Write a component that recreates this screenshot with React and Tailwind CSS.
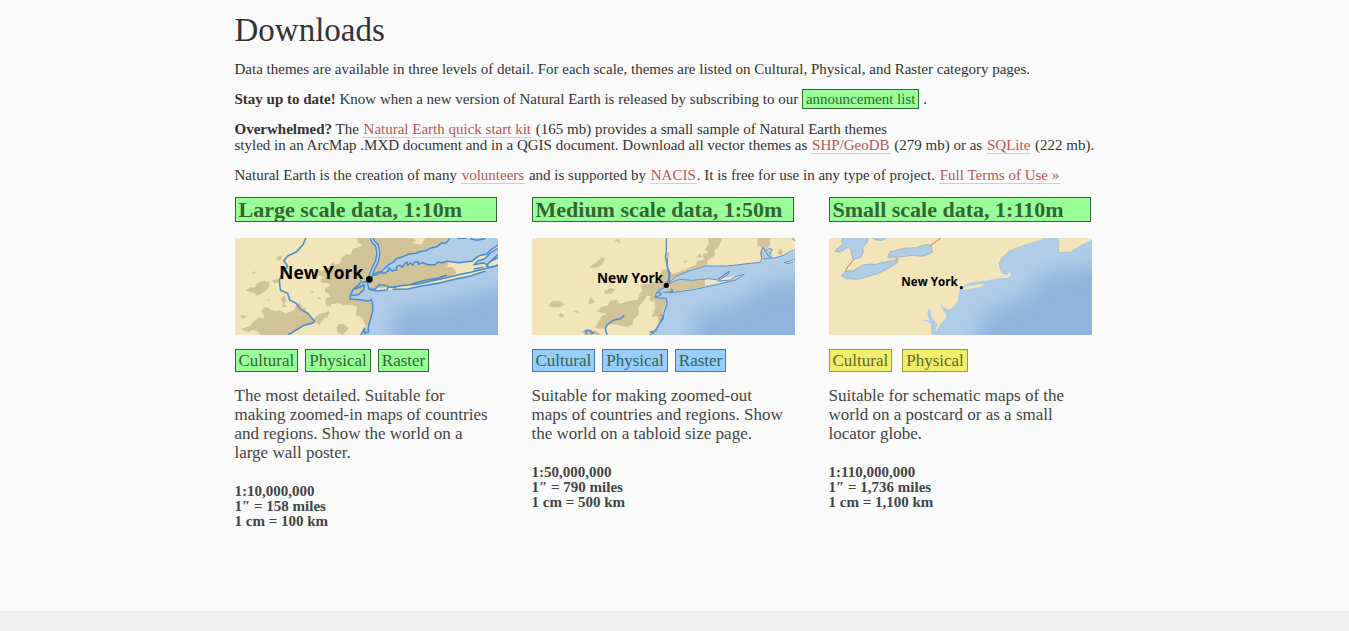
const SAND = "#f2e5ba";
const URBAN = "#d2c297";
const WATER = "#b0cde8";
const DEEP = "#90b4db";
const COAST = "#4a8ccb";

function City({ x, y, size, dotX, dotY, r }) {
  return (
    <g>
      <text x={x} y={y} fontSize={size} fontWeight="700" fontFamily="'Open Sans', 'Noto Sans', sans-serif" fill="#000">
        New York
      </text>
      <circle cx={dotX} cy={dotY} r={r} fill="#000" />
    </g>
  );
}

function LargeMap() {
  return (
    <svg viewBox="30 24 789 291" className="block w-full" role="img" aria-label="Large scale map of New York">
      <defs>
        <filter id="soft-large" x="-30%" y="-30%" width="160%" height="160%"><feGaussianBlur stdDeviation="30" /></filter>
        <clipPath id="sea-large"><path d="M428 160 L432 178 L450 182 L500 180 L540 176 L600 166 L660 152 L740 136 L780 122 L819 106 V315 H408 L420 294 L432 290 L443 244 L443 222 L430 214 L374 206 L384 184 L404 164 Z" /></clipPath>
      </defs>
      <rect x="30" y="24" width="789" height="291" fill={SAND} />
      <g fill={URBAN}>
        <path d="M394 24 H560 L572 30 L562 40 L590 44 L600 24 H672 L632 50 L572 72 L522 88 L482 108 L448 136 L436 156 L420 180 L380 190 L372 206 L440 214 L443 240 L434 288 L424 290 L410 262 L392 256 L396 232 L384 226 L362 224 L350 228 L346 220 L320 222 L300 218 L304 204 L318 200 L310 190 L300 186 L300 174 L316 168 L310 160 L292 158 L286 150 L300 140 L270 132 L276 122 L298 120 L310 112 L322 96 L332 104 L346 100 L350 84 L362 74 L378 72 L384 56 L406 50 L412 42 L398 38 Z" />
        <path d="M46 298 L76 288 L84 276 L102 262 L118 266 L116 254 L108 246 L114 234 L126 230 L138 240 L152 244 L164 240 L182 252 L206 240 L220 254 L244 250 L270 270 L268 280 L232 290 L190 315 H106 L98 304 L84 300 L70 306 Z" />
        <path d="M62 182 L76 172 L90 172 L94 162 L112 152 L134 156 L132 170 L124 182 L110 190 L98 198 L88 190 Z" />
        <path d="M154 88 L158 78 L168 76 L172 84 L164 92 Z M78 130 L92 124 L94 128 L84 132 Z M140 152 L158 146 L164 158 L150 160 Z M126 212 L132 206 L134 214 Z M166 208 L178 196 L184 210 L176 222 L188 232 L172 232 L174 220 Z M46 256 L60 256 L66 262 L50 266 Z M206 242 L214 224 L224 216 L230 232 L244 236 L240 252 L218 252 Z M256 188 L264 182 L266 190 Z M268 264 L284 252 L298 248 L312 262 L298 264 L290 276 L282 286 L274 278 Z M298 250 L310 242 L316 250 L306 258 Z M334 296 L340 282 L356 282 L372 294 L366 302 L352 315 L340 310 Z M300 220 L320 216 L318 228 L304 230 Z M266 134 L276 126 L284 136 L272 142 Z M276 202 L288 202 L284 210 Z" />
      </g>
      <path d="M448 134 L466 118 L482 104 L500 92 L522 84 L572 70 L632 48 L672 24 H819 V46 L794 62 L786 74 L762 78 L740 94 L700 98 L666 94 L640 98 L624 104 L592 98 L578 106 L548 96 L530 112 L500 120 L484 126 Z" fill={WATER} />
      <g clipPath="url(#sea-large)">
        <rect x="360" y="100" width="460" height="220" fill={WATER} />
        <path d="M510 240 L650 220 L819 170 H920 V430 H480 Z" fill={DEEP} filter="url(#soft-large)" />
      </g>
      <path d="M392 176 L414 166 L418 178 L402 192 L386 192 Z" fill={URBAN} />
      <path d="M438 150 L448 136 L484 126 L500 120 L530 112 L548 98 L578 106 L592 98 L624 104 L664 94 L670 104 L664 112 L680 110 L690 120 L694 130 L664 144 L600 160 L500 172 L432 176 Z" fill={URBAN} />
      <path d="M819 55 L798 67 L778 87 L758 93 L747 104 L774 99 L786 106 L795 95 L819 78 Z" fill={WATER} />
      <path d="M440 24 L445 36 L456 46 L460 72 L456 94 L446 114 L438 134 L430 160" fill="none" stroke={COAST} strokeWidth="13" strokeLinejoin="round" />
      <path d="M440 24 L445 36 L456 46 L460 72 L456 94 L446 114 L438 134 L430 164" fill="none" stroke={WATER} strokeWidth="5" strokeLinejoin="round" />
      <g fill="none" stroke={COAST} strokeWidth="4.5" strokeLinejoin="round" strokeLinecap="round">
        <path d="M242 25 L234 44 L214 66 L188 78 L176 92 L188 108 L172 128 L163 150 L166 180 L188 190 L194 210 L214 220 L224 236 L248 250 L269 274 L262 280 L236 286 L190 315" />
        <path d="M444 134 L460 126 L470 124 L480 114 L490 104 L506 96 L514 86 L534 80 L552 72 L572 70 L590 64 L604 62 L616 54 L636 50 L648 40 L664 38 L674 25 M738 26 L756 31 L779 26 M698 25 H722" />
        <path d="M446 136 L456 134 L468 128 L480 130 L490 122 L492 114 L500 122 L516 120 L514 110 L524 106 L532 112 L538 102 L546 96 L548 106 L556 98 L564 106 L568 96 L580 96 L580 104 L592 98 L612 104 L630 104 L640 96 L650 98 L666 94 L700 98 L740 94 L762 77 L786 72 L794 62 L819 45" />
        <path d="M819 55 L798 67 L778 87 L758 93 L747 104 L774 99 L786 104 L819 74 M819 83 L795 95 L784 110 L799 112 L819 105" />
        <path d="M819 106 L790 114 L774 118 L740 126 L710 132 L664 143 L620 153 L580 162 L540 166 L500 172 M504 178 L548 177 L590 168 L640 160 L690 148 L736 138 L780 124 M556 164 L580 156 L606 150 L640 144 L664 136 M748 117 L774 112" />
        <path d="M426 154 L432 176 L450 178 L463 164 L480 166 L490 170 L486 180 L454 183 L432 178 M490 172 L512 172 M408 153 L402 164 L386 176 L378 192 L374 207 L404 209 L430 214 L439 208 L443 222 L443 244 L437 266 L430 290 L430 306 L418 310 L419 294 L407 315 M418 164 L416 180 L400 194 L382 196 M391 177 L417 165 M426 153 L412 158" />
      </g>
      <City x={163} y={146} size={52} dotX={433} dotY={148} r={10} />
    </svg>
  );
}

function MediumMap() {
  return (
    <svg viewBox="21 24 789 291" className="block w-full" role="img" aria-label="Medium scale map of New York">
      <defs>
        <filter id="soft-medium" x="-30%" y="-30%" width="160%" height="160%"><feGaussianBlur stdDeviation="30" /></filter>
        <clipPath id="sea-medium"><path d="M392 200 L430 188 L560 168 L660 134 L700 98 L810 62 V315 H380 L410 270 L424 214 Z" /></clipPath>
      </defs>
      <rect x="21" y="24" width="789" height="291" fill={SAND} />
      <g fill={URBAN}>
        <path d="M550 24 H592 L582 48 L568 62 L570 76 L546 92 L548 106 L500 120 L450 150 L410 184 L394 202 L382 216 L372 210 L378 198 L342 198 L352 180 L346 164 L374 160 L400 150 L412 116 L430 120 L444 132 L482 118 L514 104 L516 92 L536 90 L534 72 L550 68 L540 58 L552 40 Z" />
        <path d="M210 294 L220 276 L230 258 L246 252 L214 244 L228 232 L248 226 L258 212 L276 210 L284 222 L314 212 L336 210 L346 190 L366 200 L340 232 L342 252 L326 268 L324 282 L304 292 L278 284 L256 282 L236 296 Z" />
        <path d="M388 206 L424 208 L414 246 L402 278 L396 258 L380 262 L390 236 Z" />
        <path d="M194 112 L218 94 L232 82 L240 88 L232 102 L212 114 Z M70 226 L82 214 L106 212 L120 224 L104 232 L78 232 Z M190 216 L198 202 L212 218 L194 222 Z M236 184 L258 174 L272 178 L260 190 L242 192 Z M268 34 L280 26 L288 38 Z M144 246 L156 242 L164 248 Z M100 256 L108 248 L118 258 L108 264 Z M168 306 L186 296 L214 304 L230 315 H184 Z M472 96 L488 90 L484 100 Z M516 78 L526 70 L532 80 L522 84 Z M422 70 L432 66 L434 80 L422 88 Z M698 24 H738 L734 46 L724 60 L714 92 L704 70 L710 54 L696 44 Z M756 68 L766 56 L774 66 L766 76 Z" />
      </g>
      <path d="M428 160 L454 140 L492 124 L546 108 L606 108 L672 100 L704 98 L714 88 L710 52 L724 66 L738 58 L744 86 L810 62 V315 H384 L410 276 L424 210 L392 200 L398 182 L420 168 L430 136 L425 90 L428 90 L434 132 Z" fill={WATER} />
      <g clipPath="url(#sea-medium)">
        <path d="M510 252 L620 226 L730 160 L920 146 V430 H490 Z" fill={DEEP} filter="url(#soft-medium)" />
      </g>
      <path d="M428 174 L436 160 L464 154 L542 148 L586 146 L626 138 L656 134 L612 152 L554 164 L500 176 L440 186 L416 186 Z" fill={SAND} />
      <path d="M428 174 L436 160 L464 154 L540 148 L540 168 L500 176 L440 186 L416 186 Z" fill={URBAN} />
      <path d="M582 146 L614 124 L606 138 L580 152 Z" fill={WATER} />
      <path d="M776 98 L804 88 L810 88 V102 L796 100 Z" fill={SAND} />
      <g fill="none" stroke="#5b92c9" strokeWidth="3" strokeLinejoin="round">
        <path d="M424 24 V64 L421 80 L427 112 L432 134 L430 152 L420 168 M427 84 V112 L435 130 L433 156" strokeWidth="4" />
        <path d="M425 166 L454 138 L492 123 L544 108 L608 108 L676 100 L706 97 L710 86 L708 66 L714 52 L722 64 L732 56 L742 58 L732 76 L738 84 L748 84 L776 76 L794 65 L810 59 M722 64 L730 78 L738 84 L714 87" />
        <path d="M426 164 L444 156 L464 148 L500 151 L552 146 L578 150 L604 128 L614 124 L610 132 L590 145 L580 153 L618 150 L630 140 L658 133 L632 150 L576 164 L506 179 L448 187 L414 187 M579 147 L614 124 M810 88 L778 98 L792 100 L810 95 M800 24 L810 32" />
        <path d="M425 168 L404 180 L393 192 L390 203 L424 206 L426 222 L417 248 L414 268 L404 280 L393 303 L374 306 M398 184 L410 192 L391 203 M407 254 L414 258 L400 286 L384 312 M374 315 L393 302 M438 176 L444 184 L432 186" strokeWidth="4" />
        <path d="M298 256 L288 266 L266 270 L246 284 L241 296 L246 315 M184 315 L183 302 L196 302 L200 311 L208 307" strokeWidth="5" />
      </g>
      <City x={216} y={159} size={41} dotX={424} dotY={166} r={8} />
    </svg>
  );
}

function SmallMap() {
  return (
    <svg viewBox="21 24 789 291" className="block w-full" role="img" aria-label="Small scale map of New York">
      <defs>
        <filter id="soft-small" x="-30%" y="-30%" width="160%" height="160%"><feGaussianBlur stdDeviation="30" /></filter>
        <clipPath id="sea-small"><path d="M412 180 L566 140 L532 96 L560 62 L668 24 H810 V315 H340 L410 220 Z" /></clipPath>
      </defs>
      <rect x="21" y="24" width="789" height="291" fill={SAND} />
      <path d="M668 24 L640 35 L562 62 L540 84 L532 98 L534 118 L544 132 L556 136 L562 126 L566 128 L566 138 L558 144 L530 144 L490 152 L452 156 L428 166 L412 180 L408 210 L400 224 L382 240 L368 234 L356 222 L362 240 L372 252 L372 264 L354 284 L342 306 L340 302 L347 282 L330 264 L325 236 L320 234 L316 252 L322 270 L302 270 L326 280 L328 315 H810 V24 Z" fill={WATER} />
      <g clipPath="url(#sea-small)">
        <path d="M480 256 L560 216 L630 190 L660 130 L920 96 V430 H440 Z" fill={DEEP} filter="url(#soft-small)" />
      </g>
      <path d="M414 180 L430 170 L470 162 L488 164 L478 170 L444 176 Z" fill={SAND} />
      <path d="M710 24 H810 V29 L782 42 L742 67 H710 Z" fill={SAND} />
      <g fill={WATER} stroke="#999fc0" strokeWidth="2" strokeLinejoin="round">
        <path d="M60 24 L62 44 L48 54 L38 64 L54 66 L78 52 L86 60 L94 90 L118 80 L124 68 L122 52 L136 36 L138 24 M150 24 L160 29 L180 32 L192 24" />
        <path d="M58 136 L70 124 L94 122 L124 104 L138 104 L144 102 L160 103 L190 96 L226 89 L228 96 L204 112 L174 128 L138 140 L106 148 L74 146 Z" />
        <path d="M196 80 L204 66 L232 58 L250 54 L262 54 L284 53 L300 46 L316 44 L328 46 L331 66 L316 74 L302 79 L272 76 L236 81 L214 81 L202 84 Z" />
      </g>
      <path d="M94 90 L78 110 L70 124 M222 82 L228 90 M326 46 L357 24" fill="none" stroke="#e36b50" strokeWidth="3" />
      <path d="M710 24 V67 H742 M640 35 L562 62 L540 84 L532 98 L534 118 L544 132" fill="none" stroke="#a9bdbb" strokeWidth="2" />
      <City x={238} y={168} size={35} dotX={418} dotY={173} r={5} />
    </svg>
  );
}

const tones = {
  green: "border-[#336633] bg-[#99ff99] text-[#336633]",
  blue: "border-[#4a76a8] bg-[#99ccff] text-[#336644]",
  yellow: "border-[#999944] bg-[#f0ee6a] text-[#666633]",
};

const scales = [
  {
    title: "Large scale data, 1:10m",
    Map: LargeMap,
    tone: "green",
    gap: "gap-[7px]",
    tags: ["Cultural", "Physical", "Raster"],
    text: "The most detailed. Suitable for making zoomed-in maps of countries and regions. Show the world on a large wall poster.",
    facts: ["1:10,000,000", "1″ = 158 miles", "1 cm = 100 km"],
  },
  {
    title: "Medium scale data, 1:50m",
    Map: MediumMap,
    tone: "blue",
    gap: "gap-[7px]",
    tags: ["Cultural", "Physical", "Raster"],
    text: "Suitable for making zoomed-out maps of countries and regions. Show the world on a tabloid size page.",
    facts: ["1:50,000,000", "1″ = 790 miles", "1 cm = 500 km"],
  },
  {
    title: "Small scale data, 1:110m",
    Map: SmallMap,
    tone: "yellow",
    gap: "gap-2.5",
    tags: ["Cultural", "Physical"],
    text: "Suitable for schematic maps of the world on a postcard or as a small locator globe.",
    facts: ["1:110,000,000", "1″ = 1,736 miles", "1 cm = 1,100 km"],
  },
];

function TextLink({ children }) {
  return (
    <a href="#" className="border-b border-[#e8c4c4] px-px text-[#b85555]">
      {children}
    </a>
  );
}

function ScaleColumn({ title, Map, tone, gap, tags, text, facts }) {
  return (
    <section>
      <h2 className="mr-px border border-[#336633] bg-[#99ff99] px-[3px] text-[22px] leading-[23px] font-bold text-[#336633]">{title}</h2>
      <div className="mt-4">
        <Map />
      </div>
      <div className={`mt-3.5 flex ${gap}`}>
        {tags.map((tag) => (
          <a key={tag} href="#" className={`border px-[3px] text-[17px] leading-[21px] ${tones[tone]}`}>
            {tag}
          </a>
        ))}
      </div>
      <p className="mt-3.5 pr-2 text-[17px] leading-[19px] text-[#444]">{text}</p>
      <p className="mt-[22px] text-[15px] leading-[15px] font-bold text-[#444]">
        {facts.map((fact) => (
          <span key={fact} className="block">
            {fact}
          </span>
        ))}
      </p>
    </section>
  );
}

export default function App() {
  return (
    <div className="flex min-h-screen flex-col bg-[#eee] font-['Liberation_Serif',serif] text-[#333]">
      <main className="grow bg-[#fafafa] px-4 pt-2.5 pb-20">
        <div className="mx-auto max-w-[880px]">
          <h1 className="text-[33px] leading-10">Downloads</h1>
          <div className="mt-[11px] space-y-3.5 text-[15px] leading-4">
            <p>Data themes are available in three levels of detail. For each scale, themes are listed on Cultural, Physical, and Raster category pages.</p>
            <p>
              <strong>Stay up to date!</strong> Know when a new version of Natural Earth is released by subscribing to our{" "}
              <a href="#" className="border border-[#336633] bg-[#99ff99] px-[3px] py-px text-[#336633]">announcement list</a> .
            </p>
            <p>
              <strong>Overwhelmed?</strong> The <TextLink>Natural Earth quick start kit</TextLink> (165 mb) provides a small sample of Natural Earth themes
              <br />
              styled in an ArcMap .MXD document and in a QGIS document. Download all vector themes as <TextLink>SHP/GeoDB</TextLink> (279 mb) or as{" "}
              <TextLink>SQLite</TextLink> (222 mb).
            </p>
            <p>
              Natural Earth is the creation of many <TextLink>volunteers</TextLink> and is supported by <TextLink>NACIS</TextLink>. It is free for use in any type of project.{" "}
              <TextLink>Full Terms of Use »</TextLink>
            </p>
          </div>
          <div className="mt-3.5 grid gap-[34px] pr-[23px] md:grid-cols-3">
            {scales.map((scale) => (
              <ScaleColumn key={scale.title} {...scale} />
            ))}
          </div>
        </div>
      </main>
      <footer className="h-5" />
    </div>
  );
}
